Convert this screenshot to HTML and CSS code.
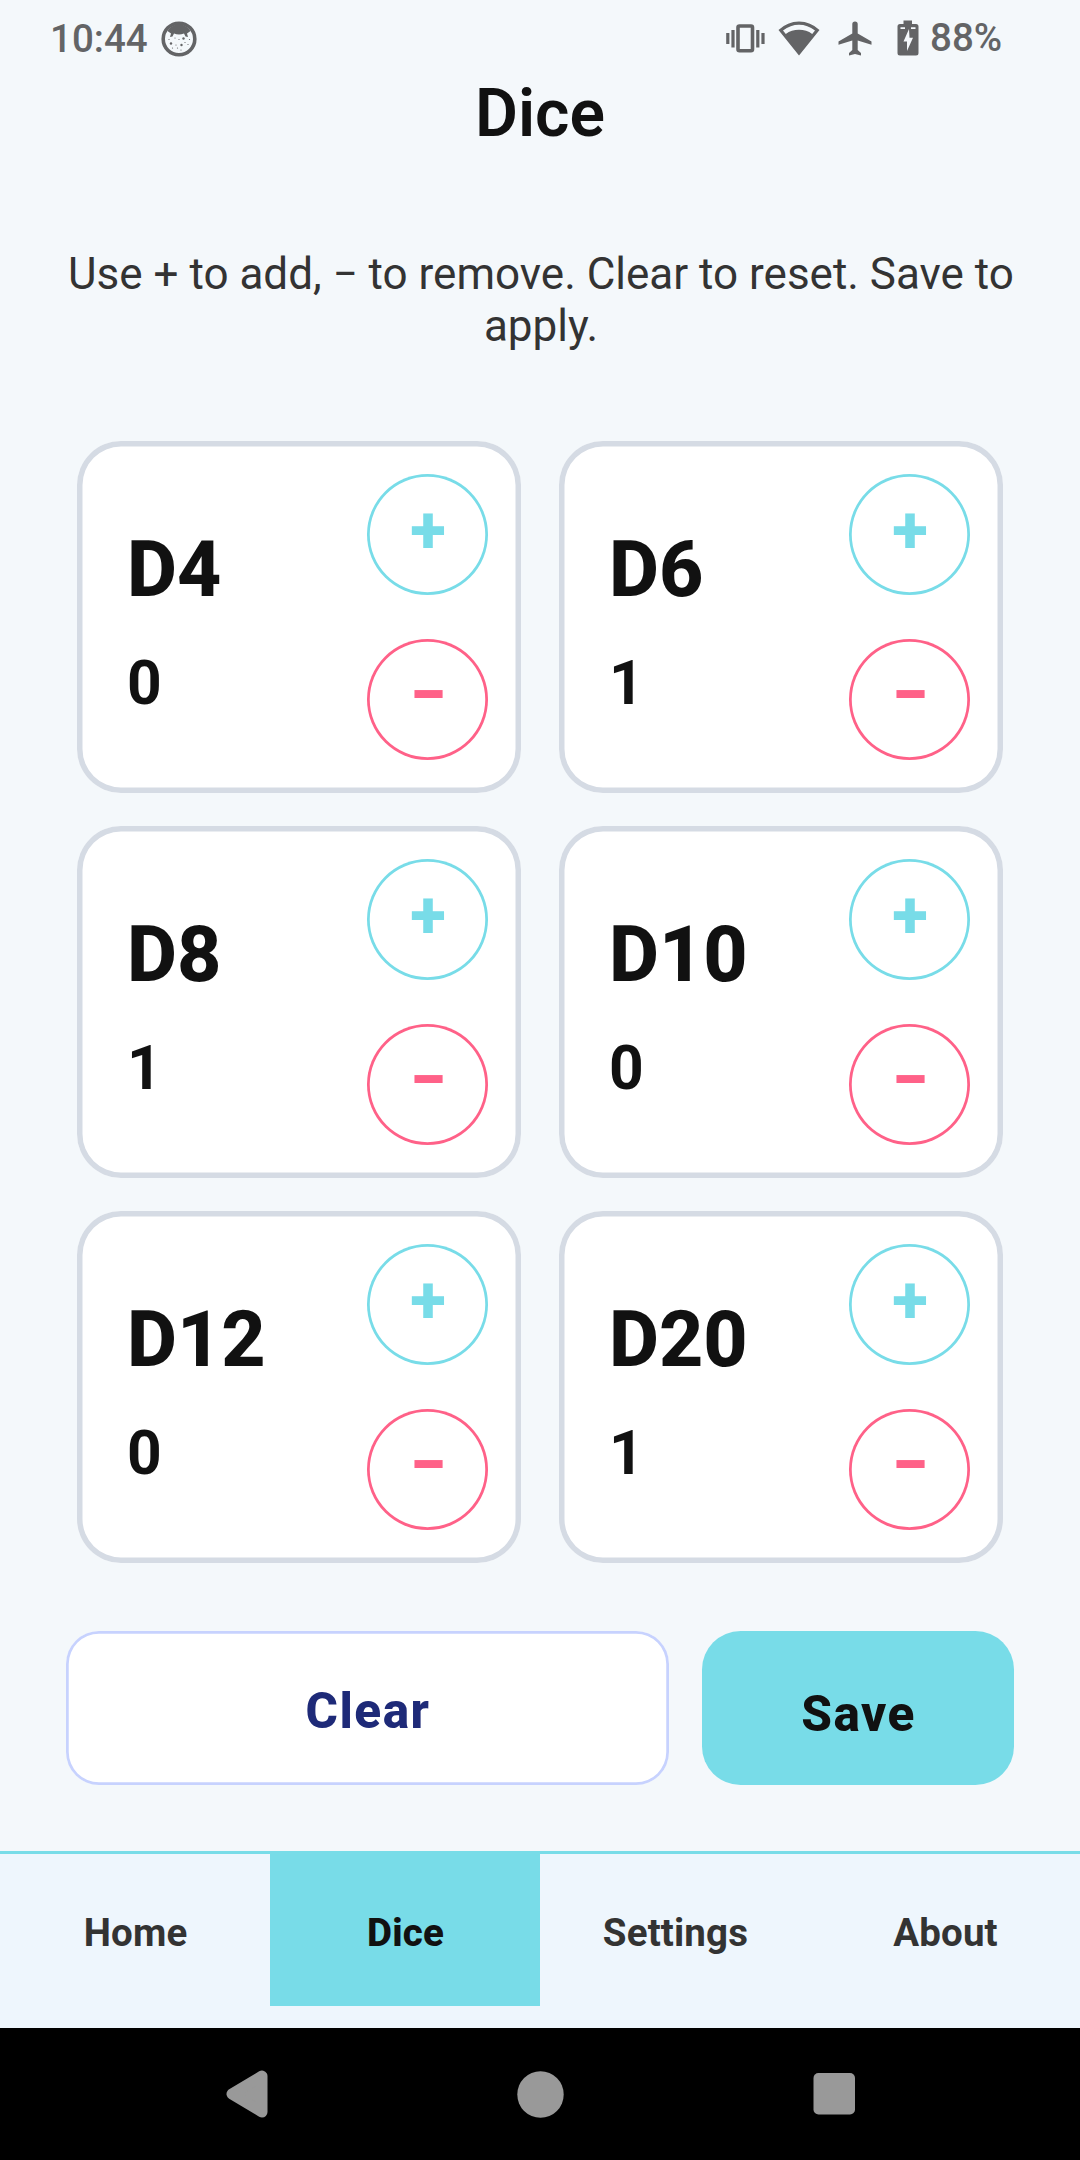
FILE: index.html
```html
<!DOCTYPE html>
<html lang="en">
<head>
<meta charset="utf-8">
<title>Dice</title>
<link rel="stylesheet" href="styles.css">
</head>
<body>
<header class="status">
  <span class="status-text clock">10:44</span>
  <svg class="face" width="36" height="36" viewBox="0 0 36 36"><circle cx="18" cy="18" r="15.800" fill="none" stroke="#636466" stroke-width="3.600"/><path d="M6.500 10C12 1 24 1 29.500 10L26 12.500L27 16L24.500 15.500L23 12.500Q18 14.500 13 12.500L11.500 15.500L9 16L10 12.500Z" fill="#636466"/><g fill="#636466"><circle cx="10" cy="22.500" r="1.200"/><circle cx="22.500" cy="17.500" r="1.200"/><circle cx="20.500" cy="24" r="1.200"/><circle cx="14" cy="17" r=".6"/><circle cx="18" cy="18.500" r=".6"/><circle cx="15" cy="24" r=".6"/><circle cx="11.500" cy="27" r=".6"/><circle cx="16.500" cy="27" r=".6"/><circle cx="24" cy="21.500" r=".6"/><circle cx="27" cy="23.500" r=".6"/><circle cx="20" cy="29" r=".6"/><circle cx="28.500" cy="18.500" r=".6"/><circle cx="8" cy="18.500" r=".6"/></g></svg>
  <span class="spacer"></span>
  <svg class="vibrate" width="39" height="29" viewBox="0 0 39 29"><rect x="12" y="2" width="14.500" height="24.800" rx="1.500" fill="none" stroke="#636466" stroke-width="3.600"/><path d="M1.800 9V20M7 6V23.500M31.800 6V23.500M37 9V20" stroke="#636466" stroke-width="3.200"/></svg>
  <svg class="wifi" width="42" height="35" viewBox="0 0 42 35"><path fill-rule="evenodd" fill="#636466" d="M21 34.500L.5 9Q9.500 .5 21 .5T41.500 9ZM5 9.500L7.800 13Q13.500 8.800 21 8.800T34.200 13L37 9.500Q29.500 3.800 21 3.800T5 9.500Z"/></svg>
  <svg class="plane" width="34" height="35" viewBox="0 0 34 35"><path fill="#636466" d="M14.300 3Q14.300 .5 17 .5T19.700 3V12.500L33.500 20.500V23.800L19.700 19.500V29L23 32V34.500L17 33L11 34.500V32L14.300 29V19.500L.5 23.800V20.500L14.300 12.500Z"/></svg>
  <svg class="battery" width="22" height="36" viewBox="0 0 22 36"><path fill="#636466" d="M6.500 .5H15V4H19Q21.500 4 21.500 6.500V33Q21.500 35.500 19 35.500H3Q.5 35.500 .5 33V6.500Q.5 4 3 4H6.500Z"/><path fill="#f4f8fb" d="M3.500 7.300H8V9H3.500ZM14 7.300H18.500V9H14ZM12 9L6.500 21.500H10V31L16 17.800H12.500Z"/></svg>
  <span class="status-text battery-text">88%</span>
</header>
<main class="main">
  <h1 class="title">Dice</h1>
  <p class="hint">Use + to add, − to remove. Clear to reset. Save to apply.</p>
  <section class="grid">
    <article class="card"><div class="info"><h2 class="name">D4</h2><span class="count">0</span></div><div class="controls"><button class="round plus">+</button><button class="round minus">−</button></div></article>
    <article class="card"><div class="info"><h2 class="name">D6</h2><span class="count">1</span></div><div class="controls"><button class="round plus">+</button><button class="round minus">−</button></div></article>
    <article class="card"><div class="info"><h2 class="name">D8</h2><span class="count">1</span></div><div class="controls"><button class="round plus">+</button><button class="round minus">−</button></div></article>
    <article class="card"><div class="info"><h2 class="name">D10</h2><span class="count">0</span></div><div class="controls"><button class="round plus">+</button><button class="round minus">−</button></div></article>
    <article class="card"><div class="info"><h2 class="name">D12</h2><span class="count">0</span></div><div class="controls"><button class="round plus">+</button><button class="round minus">−</button></div></article>
    <article class="card"><div class="info"><h2 class="name">D20</h2><span class="count">1</span></div><div class="controls"><button class="round plus">+</button><button class="round minus">−</button></div></article>
  </section>
  <div class="actions"><button class="action clear">Clear</button><button class="action save">Save</button></div>
</main>
<nav class="tabs">
  <a class="tab">Home</a><a class="tab active">Dice</a><a class="tab">Settings</a><a class="tab">About</a>
</nav>
<footer class="system">
  <svg width="42" height="48" viewBox="0 0 42 48"><path d="M36 6V42L6 24Z" fill="#999" stroke="#999" stroke-width="11" stroke-linejoin="round"/></svg>
  <svg width="47" height="47" viewBox="0 0 47 47"><circle cx="23.500" cy="23.500" r="23.200" fill="#999"/></svg>
  <svg width="42" height="42" viewBox="0 0 42 42"><rect x=".5" width="41.500" height="41.500" rx="5" fill="#999"/></svg>
</footer>
</body>
</html>
```
FILE: styles.css
```css
* { box-sizing: border-box; }
body {
  margin: 0;
  width: 1080px;
  height: 2160px;
  display: flex;
  flex-direction: column;
  background: #f4f8fb;
  color: #111;
  font-family: Roboto, sans-serif;
  overflow: hidden;
}
button { font-family: inherit; padding: 0; margin: 0; border: 0; }
svg { display: block; flex: none; }
.status { height: 75px; display: flex; align-items: flex-start; padding: 0 78px 0 50px; }
.status-text { font-size: 38.5px; line-height: 46px; margin-top: 16px; font-weight: 500; color: #636466; }
.clock { width: 99px; }
.face { margin: 21px 0 0 12px; }
.spacer { flex: 1; }
.vibrate { margin: 24px 13px 0 0; }
.wifi { margin: 21px 18px 0 0; }
.plane { margin: 21px 25px 0 0; }
.battery { margin: 20px 11px 0 0; }
.battery-text { width: 72px; margin-top: 15px; }
.main { flex: 1; display: flex; flex-direction: column; }
.title { margin: 0; text-align: center; font-size: 66px; line-height: 78px; font-weight: 600; }
.hint { margin: 95px 59px 0 61px; text-align: center; font-size: 44px; line-height: 52px; color: #333; }
.grid { display: grid; grid-template-columns: 444px 444px; grid-auto-rows: 352px; gap: 33px 38px; margin: 89px 77px 0; }
.card { display: flex; justify-content: space-between; background: #fff; box-shadow: inset 0 0 0 5.5px #d5dbe4; border-radius: 44px; padding: 33px 33px 0 50px; }
.info { display: flex; flex-direction: column; padding-top: 51px; }
.name { margin: 0; font-size: 77px; line-height: 90px; font-weight: 800; }
.count { margin-top: 33px; font-size: 60.5px; line-height: 71px; font-weight: 700; }
.controls { display: flex; flex-direction: column; gap: 44px; }
.round { width: 121px; height: 121px; border-radius: 50%; box-shadow: inset 0 0 0 2.75px currentColor; background: #fff; font-size: 66px; line-height: 77px; font-weight: 800; padding-bottom: 8px; }
.plus { color: #78dce8; padding-left: 1px; }
.minus { color: #ff6188; padding: 0 0 10px 1px; }
.actions { display: flex; gap: 33px; margin: 68px 66px 1px; }
.action { height: 154px; font-size: 49.5px; line-height: 58px; font-weight: 800; letter-spacing: 1.5px; }
.clear { width: 603px; box-shadow: inset 0 0 0 2.75px #c7d2fe; border-radius: 33px; background: #fff; color: #1e2a78; padding: 6px 0 0 1px; }
.save { width: 312px; border-radius: 38.5px; background: #78dce8; color: #111; padding: 11px 0 0 1px; }
.tabs { height: 177px; display: flex; align-items: flex-start; border-top: 3px solid #78dce8; background: #eef6fd; }
.tab { flex: 1; height: 152px; text-align: center; line-height: 45px; padding: 56px 0 0 1px; font-size: 38.5px; font-weight: 700; color: #333; letter-spacing: 0.15px; }
.active { background: #78dce8; color: #111; font-weight: 800; }
.system { height: 132px; display: flex; align-items: center; justify-content: space-between; padding: 0 225px 0 226px; background: #000; }
```
